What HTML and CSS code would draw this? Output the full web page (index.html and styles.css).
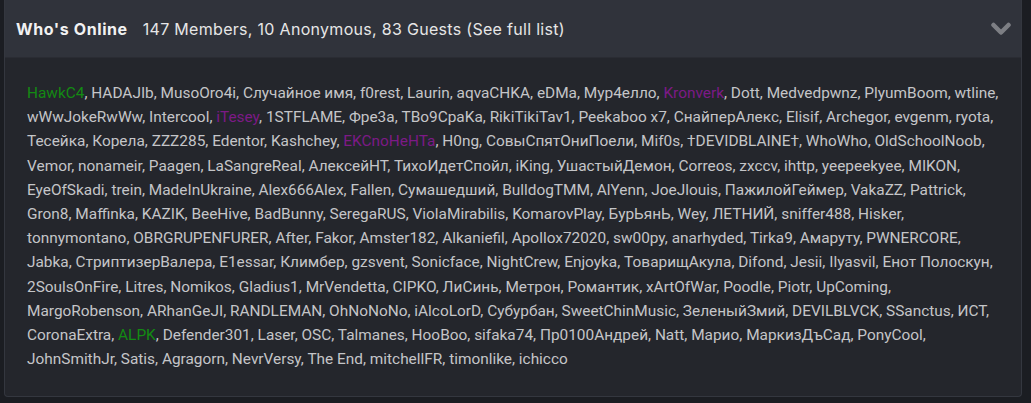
FILE: index.html
```html
<!DOCTYPE html>
<html lang="en">
    <head>
        <meta charset="UTF-8" />
        <meta name="viewport" content="width=device-width, initial-scale=1.0" />
        <title>Who's Online</title>
        <link rel="stylesheet" href="styles.css">
    </head>
    <body>
        <section class="online">
            <header class="online-head">
                <h3 class="online-title">Who's Online</h3>
                <span class="online-count">147 Members, 10 Anonymous, 83 Guests <a href="#">(See full list)</a></span>
                <svg class="online-toggle" width="20" height="14" viewBox="0 0 20 14">
                    <path d="M2.5 3 L10 10.5 L17.5 3" fill="none" stroke="#7d7f84" stroke-width="4.5" stroke-linecap="round" stroke-linejoin="round" />
                </svg>
            </header>
            <div class="online-body">
                <p class="online-list">
                    <a class="mod" href="#">HawkC4</a>, <a href="#">HADAJIb</a>, <a href="#">MusoOro4i</a>, <a href="#">Случайное имя</a>, <a href="#">f0rest</a>, <a href="#">Laurin</a>, <a href="#">aqvaCHKA</a>, <a href="#">eDMa</a>, <a href="#">Мур4елло</a>, <a class="vip" href="#">Kronverk</a>, <a href="#">Dott</a>, <a href="#">Medvedpwnz</a>, <a href="#">PlyumBoom</a>, <a href="#">wtline</a>,
                    <a href="#">wWwJokeRwWw</a>, <a href="#">Intercool</a>, <a class="vip" href="#">iTesey</a>, <a href="#">1STFLAME</a>, <a href="#">Фре3а</a>, <a href="#">TBo9CpaKa</a>, <a href="#">RikiTikiTav1</a>, <a href="#">Peekaboo x7</a>, <a href="#">СнайперАлекс</a>, <a href="#">Elisif</a>, <a href="#">Archegor</a>, <a href="#">evgenm</a>, <a href="#">ryota</a>,
                    <a href="#">Тесейка</a>, <a href="#">Корела</a>, <a href="#">ZZZ285</a>, <a href="#">Edentor</a>, <a href="#">Kashchey</a>, <a class="vip" href="#">EKCnoHeHTa</a>, <a href="#">H0ng</a>, <a href="#">СовыСпятОниПоели</a>, <a href="#">Mif0s</a>, <a href="#">†DEVIDBLAINE†</a>, <a href="#">WhoWho</a>, <a href="#">OldSchoolNoob</a>,
                    <a href="#">Vemor</a>, <a href="#">nonameir</a>, <a href="#">Paagen</a>, <a href="#">LaSangreReal</a>, <a href="#">АлексейНТ</a>, <a href="#">ТихоИдетСпойл</a>, <a href="#">iKing</a>, <a href="#">УшастыйДемон</a>, <a href="#">Correos</a>, <a href="#">zxccv</a>, <a href="#">ihttp</a>, <a href="#">yeepeekyee</a>, <a href="#">MIKON</a>,
                    <a href="#">EyeOfSkadi</a>, <a href="#">trein</a>, <a href="#">MadeInUkraine</a>, <a href="#">Alex666Alex</a>, <a href="#">Fallen</a>, <a href="#">Сумашедший</a>, <a href="#">BulldogTMM</a>, <a href="#">AlYenn</a>, <a href="#">JoeJlouis</a>, <a href="#">ПажилойГеймер</a>, <a href="#">VakaZZ</a>, <a href="#">Pattrick</a>,
                    <a href="#">Gron8</a>, <a href="#">Maffinka</a>, <a href="#">KAZIK</a>, <a href="#">BeeHive</a>, <a href="#">BadBunny</a>, <a href="#">SeregaRUS</a>, <a href="#">ViolaMirabilis</a>, <a href="#">KomarovPlay</a>, <a href="#">БурЬянЬ</a>, <a href="#">Wey</a>, <a href="#">ЛЕТНИЙ</a>, <a href="#">sniffer488</a>, <a href="#">Hisker</a>,
                    <a href="#">tonnymontano</a>, <a href="#">OBRGRUPENFURER</a>, <a href="#">After</a>, <a href="#">Fakor</a>, <a href="#">Amster182</a>, <a href="#">Alkaniefil</a>, <a href="#">Apollox72020</a>, <a href="#">sw00py</a>, <a href="#">anarhyded</a>, <a href="#">Tirka9</a>, <a href="#">Амаруту</a>, <a href="#">PWNERCORE</a>,
                    <a href="#">Jabka</a>, <a href="#">СтриптизерВалера</a>, <a href="#">E1essar</a>, <a href="#">Климбер</a>, <a href="#">gzsvent</a>, <a href="#">Sonicface</a>, <a href="#">NightCrew</a>, <a href="#">Enjoyka</a>, <a href="#">ТоварищАкула</a>, <a href="#">Difond</a>, <a href="#">Jesii</a>, <a href="#">Ilyasvil</a>, <a href="#">Енот Полоскун</a>,
                    <a href="#">2SoulsOnFire</a>, <a href="#">Litres</a>, <a href="#">Nomikos</a>, <a href="#">Gladius1</a>, <a href="#">MrVendetta</a>, <a href="#">CIPKO</a>, <a href="#">ЛиСинь</a>, <a href="#">Метрон</a>, <a href="#">Романтик</a>, <a href="#">xArtOfWar</a>, <a href="#">Poodle</a>, <a href="#">Piotr</a>, <a href="#">UpComing</a>,
                    <a href="#">MargoRobenson</a>, <a href="#">ARhanGeJI</a>, <a href="#">RANDLEMAN</a>, <a href="#">OhNoNoNo</a>, <a href="#">iAlcoLorD</a>, <a href="#">Субурбан</a>, <a href="#">SweetChinMusic</a>, <a href="#">ЗеленыйЗмий</a>, <a href="#">DEVILBLVCK</a>, <a href="#">SSanctus</a>, <a href="#">ИСТ</a>,
                    <a href="#">CoronaExtra</a>, <a class="mod" href="#">ALPK</a>, <a href="#">Defender301</a>, <a href="#">Laser</a>, <a href="#">OSC</a>, <a href="#">Talmanes</a>, <a href="#">HooBoo</a>, <a href="#">sifaka74</a>, <a href="#">Пр0100Андрей</a>, <a href="#">Natt</a>, <a href="#">Марио</a>, <a href="#">МаркизДъСад</a>, <a href="#">PonyCool</a>,
                    <a href="#">JohnSmithJr</a>, <a href="#">Satis</a>, <a href="#">Agragorn</a>, <a href="#">NevrVersy</a>, <a href="#">The End</a>, <a href="#">mitchellFR</a>, <a href="#">timonlike</a>, <a href="#">ichicco</a>
                </p>
            </div>
        </section>
    </body>
</html>
```

FILE: styles.css
```css
body {
    margin: 0;
    background: #1b1d22;
    font-family: Roboto, "Noto Sans", sans-serif;
    padding: 0 9px 8px 4px;
}
.online {
    border: 1px solid #34373f;
    border-top: none;
    border-radius: 0 0 4px 4px;
    overflow: hidden;
    background: #24262c;
}
.online-head {
    display: flex;
    align-items: center;
    height: 57px;
    padding: 0 10px 0 11px;
    background: #30333b;
    border-bottom: 1px solid #2a2c33;
}
.online-title {
    margin: 0;
    font-family: Inter, Roboto, sans-serif;
    font-size: 16px;
    font-weight: 700;
    letter-spacing: 0.6px;
    color: #f2f2f2;
}
.online-count {
    margin-left: 15px;
    font-family: Inter, Roboto, sans-serif;
    font-size: 16px;
    letter-spacing: 0.3px;
    color: #e6e6e6;
}
.online-count a {
    color: inherit;
    text-decoration: none;
}
.online-toggle {
    margin-left: auto;
}
.online-body {
    padding: 23px 18px 25px 22px;
}
.online-list {
    margin: 0;
    font-size: 15.4px;
    line-height: 24.2px;
    color: #c4c5c8;
}
.online-list a {
    color: #c4c5c8;
    text-decoration: none;
}
.online-list a.mod {
    color: #138a13;
}
.online-list a.vip {
    color: #7c1a86;
}
```
